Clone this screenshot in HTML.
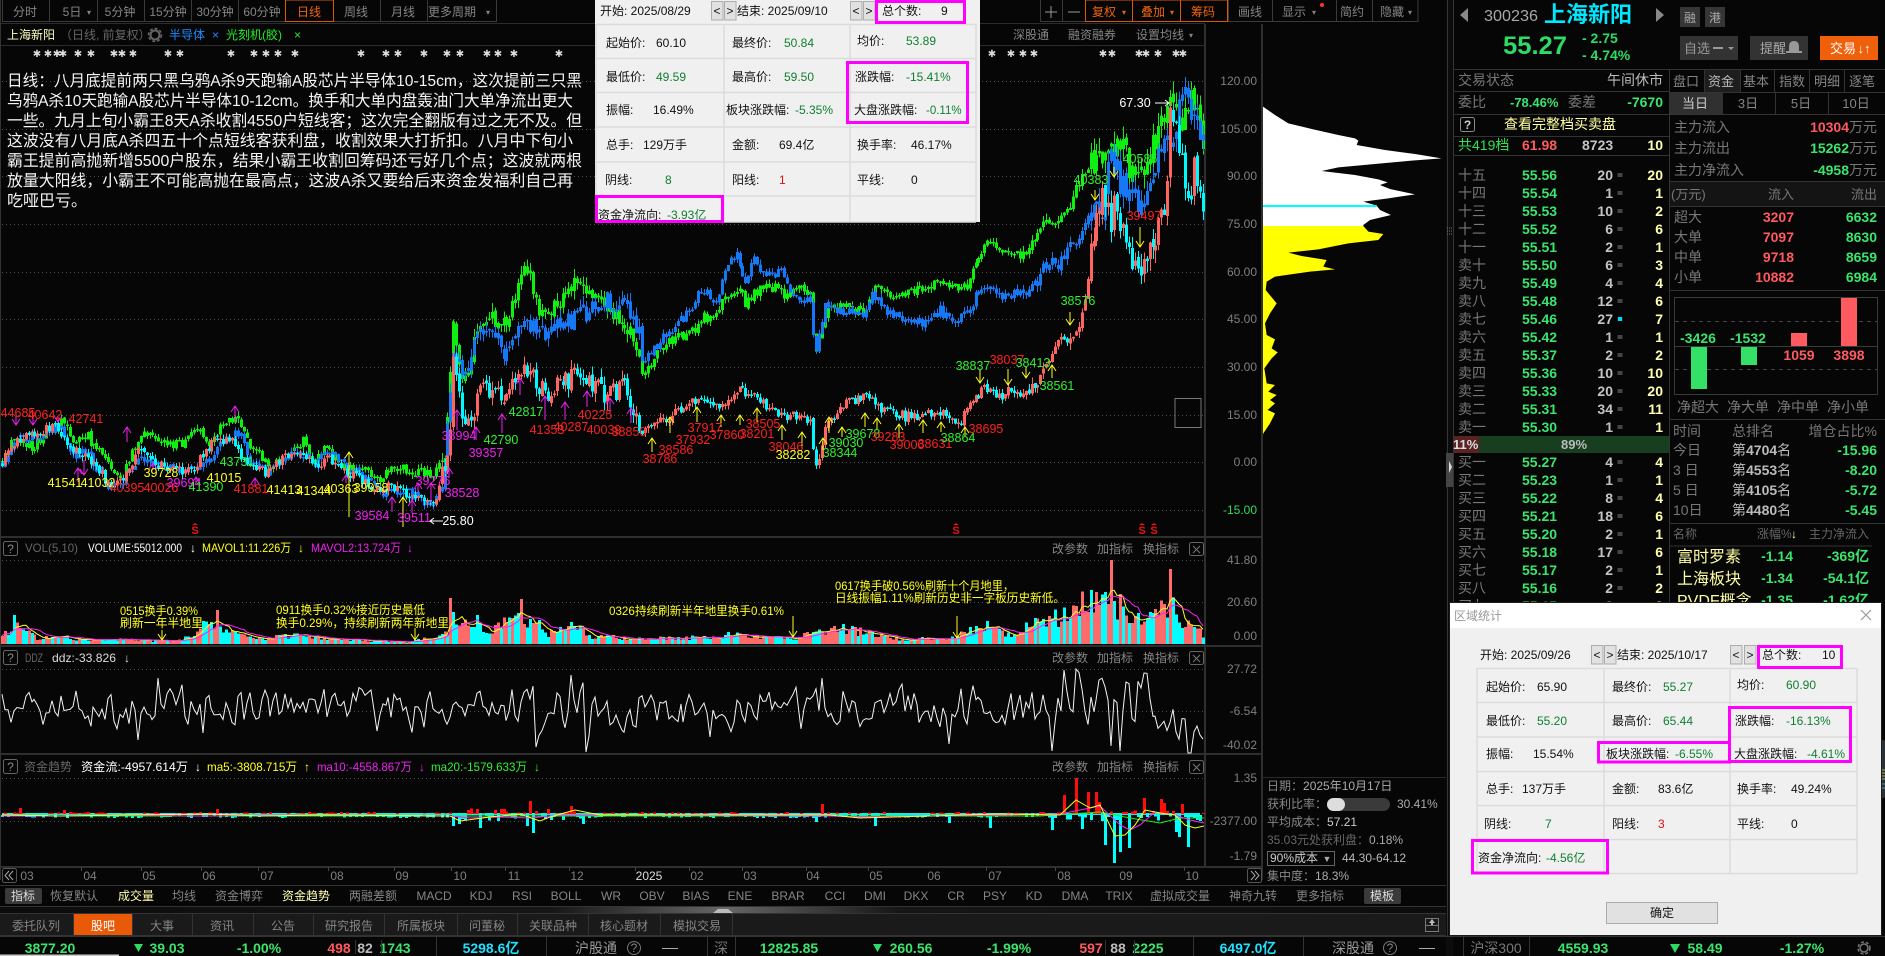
<!DOCTYPE html>
<html lang="zh">
<head>
<meta charset="utf-8">
<title>上海新阳</title>
<style>
html,body{margin:0;padding:0;background:#060606;width:1885px;height:956px;overflow:hidden}
svg{display:block;font-family:"Liberation Sans","WenQuanYi Zen Hei","Noto Sans CJK SC",sans-serif}
text{white-space:pre}
.t{font-size:12px;fill:#858585;text-anchor:middle}
.o{fill:#f0640f}
.ax{font-size:12px;fill:#7f7f7f;text-anchor:end}
.m{font-size:12.5px;text-anchor:middle}
.r{fill:#ff2020}.y{fill:#ffff20}.g{fill:#30f030}.p{fill:#f020f0}.w{fill:#fff}
.b14{font-size:14px;font-weight:bold}
.n{font-size:14px;fill:#777}
.pr{font-size:14px;font-weight:bold;fill:#3be46c}
.v{font-size:14px;font-weight:bold;fill:#c4c4c4;text-anchor:end}
.c{font-size:14px;font-weight:bold;fill:#ffffb0;text-anchor:end}
.up{fill:#ff5a5f}.dn{fill:#3be46c}
.e{text-anchor:end}.mid{text-anchor:middle}
.d{font-size:12px;fill:#111}
.dg{font-size:12px;fill:#0f7f2f}
.ann{font-size:12px;fill:#ffff20}
.note{font-size:16px;fill:#f4f4f4}
.sm{font-size:12px}
</style>
</head>
<body>
<svg xmlns="http://www.w3.org/2000/svg" width="1885" height="956" viewBox="0 0 1885 956">
<rect width="1885" height="956" fill="#060606"/>

<!-- toolbar -->
<g stroke="#3a3a3a" fill="none">
<path d="M2.5 0V21.5H496.5V0M49.5 0V21M97.5 0V21M144.5 0V21M191.5 0V21M238.5 0V21M285.5 0V21M333.5 0V21M380.5 0V21M427.5 0V21"/>
<path d="M0 23.5H1205M0 45.5H1205" stroke="#2c2c2c"/>
<path d="M1040.5 0V21.5H1418V0M1062.5 0V21M1228.5 0V21M1272.5 0V21M1336.5 0V21M1372.5 0V21"/>
</g>
<rect x="285.5" y="0" width="48" height="21.5" fill="none" stroke="#d9560b"/>
<rect x="1085.5" y="0" width="142" height="21.5" fill="none" stroke="#d9560b"/>
<path d="M1132.5 0V21M1180.5 0V21" stroke="#d9560b"/>
<g class="tb">
<text class="t" x="25" y="16">分时</text><text class="t" x="72" y="16">5日</text><text class="t" x="89" y="15" font-size="8" style="font-size:8px">▾</text>
<text class="t" x="120" y="16">5分钟</text><text class="t" x="168" y="16">15分钟</text><text class="t" x="215" y="16">30分钟</text><text class="t" x="262" y="16">60分钟</text>
<text class="t o" x="309" y="16">日线</text><text class="t" x="356" y="16">周线</text><text class="t" x="403" y="16">月线</text><text class="t" x="452" y="16">更多周期</text><text class="t" x="488" y="15" style="font-size:8px">▾</text>
<path d="M1051 6V18M1045 12H1057M1068 12H1080" stroke="#999" fill="none"/>
<text class="t o" x="1104" y="16">复权</text><text class="t o" x="1124" y="15" style="font-size:8px">▾</text>
<text class="t o" x="1153" y="16">叠加</text><text class="t o" x="1172" y="15" style="font-size:8px">▾</text>
<text class="t o" x="1203" y="16">筹码</text>
<text class="t" x="1250" y="16">画线</text><text class="t" x="1294" y="16">显示</text><text class="t" x="1314" y="15" style="font-size:8px">▾</text><circle cx="1322" cy="5" r="2" fill="#f33"/>
<text class="t" x="1352" y="16">简约</text><text class="t" x="1392" y="16">隐藏</text><text class="t" x="1410" y="15" style="font-size:8px">▾</text>
</g>

<!-- title row -->
<text x="7" y="39" class="sm" fill="#ffffc0">上海新阳</text>
<text x="60" y="39" class="sm" fill="#666">（日线, 前复权）</text>
<circle cx="155" cy="35" r="4.5" fill="none" stroke="#666" stroke-width="2"/><circle cx="155" cy="35" r="6.5" fill="none" stroke="#666" stroke-width="1.5" stroke-dasharray="3 2"/>
<text x="169" y="39" class="sm" fill="#1a8cff">半导体</text><text x="212" y="39" class="sm" fill="#1a8cff">×</text>
<text x="226" y="39" class="sm" fill="#20f020">光刻机(胶)</text><text x="294" y="39" class="sm" fill="#20f020">×</text>
<text class="t" x="1031" y="39">深股通</text><text class="t" x="1092" y="39">融资融券</text><text class="t" x="1160" y="39">设置均线</text><text class="t" x="1191" y="38" style="font-size:8px">▾</text>

<!-- star marks -->
<g fill="#ddd" style="font-size:10px" text-anchor="middle" font-family="DejaVu Sans">
<text x="37" y="57">✱</text><text x="48" y="57">✱</text><text x="57" y="57">✱</text><text x="63" y="57">✱</text><text x="78" y="57">✱</text><text x="91" y="57">✱</text><text x="114" y="57">✱</text><text x="122" y="57">✱</text><text x="133" y="57">✱</text><text x="168" y="57">✱</text><text x="180" y="57">✱</text><text x="231" y="57">✱</text><text x="254" y="57">✱</text><text x="266" y="57">✱</text><text x="278" y="57">✱</text><text x="295" y="57">✱</text><text x="361" y="57">✱</text><text x="386" y="57">✱</text><text x="398" y="57">✱</text><text x="424" y="57">✱</text><text x="447" y="57">✱</text><text x="460" y="57">✱</text><text x="487" y="57">✱</text><text x="498" y="57">✱</text><text x="514" y="57">✱</text><text x="559" y="57">✱</text>
<text x="992" y="57">✱</text><text x="1011" y="57">✱</text><text x="1023" y="57">✱</text><text x="1034" y="57">✱</text><text x="1103" y="57">✱</text><text x="1112" y="57">✱</text><text x="1139" y="57">✱</text><text x="1146" y="57">✱</text><text x="1158" y="57">✱</text><text x="1176" y="57">✱</text><text x="1183" y="57">✱</text>
</g>

<!-- grids -->
<g stroke="#4d4d4d" stroke-dasharray="1 3" fill="none">
<path d="M2 81.5H1205M2 129.5H1205M2 176.5H1205M2 224.5H1205M2 272.5H1205M2 319.5H1205M2 367.5H1205M2 415.5H1205M2 462.5H1205M2 510.5H1205"/>
<path d="M2 560.5H1205M2 602.5H1205M2 669.5H1205M2 711.5H1205M2 778.5H1205M2 821.5H1205"/>
</g>
<path d="M0.5 0V880" stroke="#333"/>
<g stroke="#2f2f2f" stroke-width="2" fill="none">
<path d="M0 537H1262M0 646H1262M0 754H1262M0 867H1262M1205 24V867M1262 24V880"/>
</g>
<rect x="1175" y="398.5" width="26" height="29" fill="none" stroke="#777"/>

<!-- candles placed by script -->
<g id="chart" shape-rendering="crispEdges"></g>
<g id="lines" fill="none"></g>

<!-- note overlay -->
<text class="note" x="7" y="86" textLength="575" lengthAdjust="spacingAndGlyphs">日线：八月底提前两只黑乌鸦A杀9天跑输A股芯片半导体10-15cm，这次提前三只黑</text>
<text class="note" x="7" y="106" textLength="566" lengthAdjust="spacingAndGlyphs">乌鸦A杀10天跑输A股芯片半导体10-12cm。换手和大单内盘轰油门大单净流出更大</text>
<text class="note" x="7" y="126" textLength="575" lengthAdjust="spacingAndGlyphs">一些。九月上旬小霸王8天A杀收割4550户短线客；这次完全翻版有过之无不及。但</text>
<text class="note" x="7" y="146" textLength="566" lengthAdjust="spacingAndGlyphs">这波没有八月底A杀四五十个点短线客获利盘，收割效果大打折扣。八月中下旬小</text>
<text class="note" x="7" y="166" textLength="575" lengthAdjust="spacingAndGlyphs">霸王提前高抛新增5500户股东，结果小霸王收割回筹码还亏好几个点；这波就两根</text>
<text class="note" x="7" y="186" textLength="566" lengthAdjust="spacingAndGlyphs">放量大阳线，小霸王不可能高抛在最高点，这波A杀又要给后来资金发福利自己再</text>
<text class="note" x="7" y="206">吃哑巴亏。</text>

<!-- main-chart numeric labels -->
<g class="m">
<text class="m r" x="18" y="417">44685</text><text class="m r" x="45" y="419">40642</text><text class="m r" x="86" y="423">42741</text>
<text class="m y" x="65" y="487">41541</text><text class="m y" x="98" y="487">41032</text><text class="m r" x="127" y="492">40395</text><text class="m r" x="161" y="492">40026</text><text class="m y" x="161" y="477">39728</text><text class="m p" x="184" y="487">39694</text><text class="m g" x="206" y="491">41390</text><text class="m y" x="224" y="482">41015</text><text class="m g" x="237" y="466">43731</text><text class="m r" x="251" y="493">41881</text><text class="m y" x="284" y="494">41413</text><text class="m y" x="314" y="495">41344</text><text class="m y" x="341" y="493">40363</text><text class="m y" x="371" y="492">39958</text>
<text class="m p" x="372" y="520">39584</text><text class="m p" x="414" y="522">39511</text><text class="m p" x="433" y="485">39276</text><text class="m p" x="462" y="497">38528</text><text class="m p" x="459" y="440">38994</text><text class="m p" x="486" y="457">39357</text><text class="m g" x="501" y="444">42790</text><text class="m g" x="526" y="416">42817</text><text class="m r" x="547" y="434">41353</text><text class="m r" x="571" y="431">40287</text><text class="m r" x="595" y="419">40225</text><text class="m r" x="604" y="434">40039</text><text class="m r" x="629" y="436">38850</text>
<text class="m r" x="660" y="463">38786</text><text class="m r" x="676" y="454">38586</text><text class="m r" x="693" y="444">37932</text><text class="m r" x="705" y="432">37917</text><text class="m r" x="727" y="439">37860</text><text class="m r" x="757" y="438">38201</text><text class="m r" x="763" y="428">38505</text><text class="m r" x="786" y="451">38046</text><text class="m y" x="793" y="459">38282</text><text class="m g" x="846" y="447">39030</text><text class="m g" x="840" y="457">38344</text><text class="m g" x="863" y="438">39678</text><text class="m r" x="888" y="441">39283</text><text class="m r" x="907" y="449">39006</text><text class="m r" x="935" y="448">38631</text><text class="m g" x="958" y="442">38864</text><text class="m r" x="986" y="433">38695</text>
<text class="m g" x="973" y="370">38837</text><text class="m r" x="1007" y="364">38037</text><text class="m g" x="1033" y="367">38413</text><text class="m g" x="1057" y="390">38561</text><text class="m g" x="1078" y="305">38576</text><text class="m g" x="1091" y="184">40383</text><text class="m g" x="1140" y="163">40585</text><text class="m r" x="1144" y="220">39497</text>
<text class="m w" x="458" y="525">25.80</text><text class="m w" x="1135" y="107">67.30</text>
</g>
<path d="M443 521H430M434 518L430 521L434 524M1155 103H1169M1165 100L1169 103L1165 106" stroke="#fff" fill="none"/>
<g fill="#ee1111" font-weight="bold" style="font-size:11px" text-anchor="middle">
<text x="195" y="534">S</text><text x="956" y="534">S</text><text x="1142" y="534">S</text><text x="1154" y="534">S</text>
</g>
<path d="M192 525L195 523L198 525ZM953 525L956 523L959 525ZM1139 525L1142 523L1145 525ZM1151 525L1154 523L1157 525Z" fill="#ee1111"/>

<!-- price axis -->
<g>
<text class="ax" x="1257" y="85">120.00</text><text class="ax" x="1257" y="133">105.00</text><text class="ax" x="1257" y="180">90.00</text><text class="ax" x="1257" y="228">75.00</text><text class="ax" x="1257" y="276">60.00</text><text class="ax" x="1257" y="323">45.00</text><text class="ax" x="1257" y="371">30.00</text><text class="ax" x="1257" y="419">15.00</text><text class="ax" x="1257" y="466">0.00</text><text class="ax" x="1257" y="514" style="fill:#2edb64">-15.00</text>
<text class="ax" x="1257" y="564">41.80</text><text class="ax" x="1257" y="606">20.60</text><text class="ax" x="1257" y="640">0.00</text>
<text class="ax" x="1257" y="673">27.72</text><text class="ax" x="1257" y="715">-6.54</text><text class="ax" x="1257" y="749">-40.02</text>
<text class="ax" x="1257" y="782">1.35</text><text class="ax" x="1257" y="825">-2377.00</text><text class="ax" x="1257" y="860">-1.79</text>
</g>

<!-- chip distribution -->
<g transform="translate(1255,90) scale(.33333)">
<polygon fill="#fff" points="24,50 60,75 100,100 175,118 250,135 300,145 310,152 305,165 390,180 480,192 560,205 470,212 380,220 250,232 200,243 300,255 370,268 398,277 375,285 405,297 480,313 400,325 325,335 365,347 375,360 408,375 345,390 325,405 325,408 24,408"/>
<rect x="24" y="345" width="341" height="6" fill="#00ffff"/>
<polygon fill="#ffff00" points="24,408 325,408 340,425 385,432 370,450 280,460 190,478 100,488 140,498 215,510 205,530 240,538 165,545 60,560 35,575 32,600 65,640 45,670 30,700 35,735 60,748 50,775 68,787 50,805 28,835 35,880 60,885 40,905 65,915 45,930 60,940 38,960 60,970 45,1000 25,1030 24,1035"/>
</g>
<path d="M1262 777.5H1447" stroke="#2a2a2a"/>

<!-- sub-panel headers -->
<g>
<rect x="3.5" y="541.5" width="14" height="14" rx="2" fill="none" stroke="#666"/><text x="10.5" y="553" class="mid sm" fill="#888">?</text>
<text x="25" y="552" class="sm" fill="#666" textLength="53" lengthAdjust="spacingAndGlyphs">VOL(5,10)</text>
<text x="88" y="552" class="sm" fill="#fff" textLength="94" lengthAdjust="spacingAndGlyphs">VOLUME:55012.000</text><text x="193" y="552" class="mid sm" fill="#fff">↓</text>
<text x="202" y="552" class="sm" fill="#ffff20" textLength="89" lengthAdjust="spacingAndGlyphs">MAVOL1:11.226万</text><text x="301" y="552" class="mid sm" fill="#ffff20">↓</text>
<text x="311" y="552" class="sm" fill="#f020f0" textLength="90" lengthAdjust="spacingAndGlyphs">MAVOL2:13.724万</text><text x="410" y="552" class="mid sm" fill="#f020f0">↓</text>

<rect x="3.5" y="650.5" width="14" height="14" rx="2" fill="none" stroke="#666"/><text x="10.5" y="662" class="mid sm" fill="#888">?</text>
<text x="25" y="662" class="sm" fill="#666" textLength="18" lengthAdjust="spacingAndGlyphs">DDZ</text>
<text x="52" y="662" class="sm" fill="#ddd" textLength="64" lengthAdjust="spacingAndGlyphs">ddz:-33.826</text><text x="127" y="662" class="mid sm" fill="#ddd">↓</text>

<rect x="3.5" y="759.5" width="14" height="14" rx="2" fill="none" stroke="#666"/><text x="10.5" y="771" class="mid sm" fill="#888">?</text>
<text x="24" y="771" class="sm" fill="#666">资金趋势</text>
<text x="81" y="771" class="sm" fill="#fff" textLength="107" lengthAdjust="spacingAndGlyphs">资金流:-4957.614万</text><text x="198" y="771" class="mid sm" fill="#fff">↓</text>
<text x="207" y="771" class="sm" fill="#ffff20" textLength="90" lengthAdjust="spacingAndGlyphs">ma5:-3808.715万</text><text x="307" y="771" class="mid sm" fill="#ffff20">↑</text>
<text x="317" y="771" class="sm" fill="#f020f0" textLength="95" lengthAdjust="spacingAndGlyphs">ma10:-4558.867万</text><text x="422" y="771" class="mid sm" fill="#f020f0">↓</text>
<text x="431" y="771" class="sm" fill="#30f030" textLength="96" lengthAdjust="spacingAndGlyphs">ma20:-1579.633万</text><text x="537" y="771" class="mid sm" fill="#30f030">↓</text>

<text class="t" x="1070" y="553">改参数</text><text class="t" x="1115" y="553">加指标</text><text class="t" x="1161" y="553">换指标</text>
<rect x="1189.5" y="542.5" width="14" height="13" rx="2" fill="none" stroke="#666"/><path d="M1193 546L1200 553M1200 546L1193 553" stroke="#777"/>
<text class="t" x="1070" y="662">改参数</text><text class="t" x="1115" y="662">加指标</text><text class="t" x="1161" y="662">换指标</text>
<rect x="1189.5" y="651.5" width="14" height="13" rx="2" fill="none" stroke="#666"/><path d="M1193 655L1200 662M1200 655L1193 662" stroke="#777"/>
<text class="t" x="1070" y="771">改参数</text><text class="t" x="1115" y="771">加指标</text><text class="t" x="1161" y="771">换指标</text>
<rect x="1189.5" y="760.5" width="14" height="13" rx="2" fill="none" stroke="#666"/><path d="M1193 764L1200 771M1200 764L1193 771" stroke="#777"/>
</g>

<!-- vol annotations -->
<g>
<text class="ann" x="120" y="615" textLength="78" lengthAdjust="spacingAndGlyphs">0515换手0.39%</text>
<text class="ann" x="120" y="627" textLength="83" lengthAdjust="spacingAndGlyphs">刷新一年半地里</text>
<text class="ann" x="276" y="614" textLength="149" lengthAdjust="spacingAndGlyphs">0911换手0.32%接近历史最低</text>
<text class="ann" x="276" y="627" textLength="173" lengthAdjust="spacingAndGlyphs">换手0.29%，持续刷新两年新地里</text>
<text class="ann" x="609" y="615" textLength="175" lengthAdjust="spacingAndGlyphs">0326持续刷新半年地里换手0.61%</text>
<text class="ann" x="835" y="590" textLength="179" lengthAdjust="spacingAndGlyphs">0617换手破0.56%刷新十个月地里，</text>
<text class="ann" x="835" y="602" textLength="230" lengthAdjust="spacingAndGlyphs">日线振幅1.11%刷新历史非一字板历史新低。</text>
</g>

<!-- date axis -->
<g class="ax" style="text-anchor:middle">
<text class="ax" style="text-anchor:middle" x="27" y="880">03</text><text class="ax" style="text-anchor:middle" x="90" y="880">04</text><text class="ax" style="text-anchor:middle" x="149" y="880">05</text><text class="ax" style="text-anchor:middle" x="209" y="880">06</text><text class="ax" style="text-anchor:middle" x="267" y="880">07</text><text class="ax" style="text-anchor:middle" x="337" y="880">08</text><text class="ax" style="text-anchor:middle" x="402" y="880">09</text><text class="ax" style="text-anchor:middle" x="460" y="880">10</text><text class="ax" style="text-anchor:middle" x="514" y="880">11</text><text class="ax" style="text-anchor:middle" x="577" y="880">12</text><text class="ax" style="text-anchor:middle;fill:#ddd" x="649" y="880">2025</text><text class="ax" style="text-anchor:middle" x="697" y="880">02</text><text class="ax" style="text-anchor:middle" x="750" y="880">03</text><text class="ax" style="text-anchor:middle" x="813" y="880">04</text><text class="ax" style="text-anchor:middle" x="876" y="880">05</text><text class="ax" style="text-anchor:middle" x="934" y="880">06</text><text class="ax" style="text-anchor:middle" x="995" y="880">07</text><text class="ax" style="text-anchor:middle" x="1064" y="880">08</text><text class="ax" style="text-anchor:middle" x="1126" y="880">09</text><text class="ax" style="text-anchor:middle" x="1192" y="880">10</text>
</g>
<path d="M81.5 867V871M141.5 867V871M201.5 867V871M258.5 867V871M328.5 867V871M394.5 867V871M451.5 867V871M505.5 867V871M569.5 867V871M635.5 867V871M689.5 867V871M742.5 867V871M806.5 867V871M868.5 867V871M986.5 867V871M1055.5 867V871M1184.5 867V871" stroke="#444"/>
<rect x="2.5" y="868.5" width="14" height="14" rx="2" fill="none" stroke="#555"/><path d="M9 871L5 875.5L9 880M13 871L9 875.5L13 880" stroke="#aaa" fill="none"/>
<rect x="1247.5" y="868.5" width="14" height="14" rx="2" fill="none" stroke="#555"/><path d="M1251 871L1255 875.5L1251 880M1255 871L1259 875.5L1255 880" stroke="#aaa" fill="none"/>

<!-- chip info -->
<g font-size="12" style="font-size:12px" fill="#888">
<text x="1267" y="790">日期：<tspan fill="#aaa">2025年10月17日</tspan></text>
<text x="1267" y="808">获利比率：</text>
<rect x="1327" y="798" width="63" height="13" rx="6.5" fill="#3a3a3a"/><rect x="1327" y="798" width="18" height="13" rx="6.5" fill="#ddd"/>
<text x="1397" y="808" fill="#aaa">30.41%</text>
<text x="1267" y="826">平均成本：<tspan fill="#ccc">57.21</tspan></text>
<text x="1267" y="844" fill="#666">35.03元处获利盘：<tspan fill="#aaa">0.18%</tspan></text>
<rect x="1267.5" y="851.5" width="67" height="14" fill="none" stroke="#666"/>
<text x="1270" y="862" fill="#ccc">90%成本</text><text x="1327" y="862" class="mid" fill="#aaa" style="font-size:9px">▼</text>
<text x="1342" y="862" fill="#bbb">44.30-64.12</text>
<text x="1267" y="880">集中度：<tspan fill="#aaa">18.3%</tspan></text>
</g>

<!-- indicator bar -->
<rect x="0" y="885" width="1450" height="1" fill="#333"/><rect x="0" y="906" width="1450" height="1" fill="#333"/>
<rect x="5" y="888" width="37" height="16" rx="2" fill="#3a3a3a"/><rect x="1364" y="888" width="37" height="16" rx="2" fill="#3a3a3a"/>
<g class="t">
<text class="t" x="23" y="900" style="fill:#ddd">指标</text><text class="t" x="74" y="900">恢复默认</text><text class="t" x="136" y="900" style="fill:#ffffb0">成交量</text><text class="t" x="184" y="900">均线</text><text class="t" x="239" y="900">资金博弈</text><text class="t" x="306" y="900" style="fill:#ffffb0">资金趋势</text><text class="t" x="373" y="900">两融差额</text>
<text class="t" x="434" y="900">MACD</text><text class="t" x="481" y="900">KDJ</text><text class="t" x="522" y="900">RSI</text><text class="t" x="566" y="900">BOLL</text><text class="t" x="611" y="900">WR</text><text class="t" x="652" y="900">OBV</text><text class="t" x="696" y="900">BIAS</text><text class="t" x="740" y="900">ENE</text><text class="t" x="788" y="900">BRAR</text><text class="t" x="835" y="900">CCI</text><text class="t" x="875" y="900">DMI</text><text class="t" x="916" y="900">DKX</text><text class="t" x="956" y="900">CR</text><text class="t" x="995" y="900">PSY</text><text class="t" x="1034" y="900">KD</text><text class="t" x="1075" y="900">DMA</text><text class="t" x="1119" y="900">TRIX</text>
<text class="t" x="1180" y="900">虚拟成交量</text><text class="t" x="1253" y="900">神奇九转</text><text class="t" x="1320" y="900">更多指标</text><text class="t" x="1382" y="900" style="fill:#ddd">模板</text>
</g>
<defs><linearGradient id="sl" x1="0" x2="1"><stop offset="0" stop-color="#0c0c0c"/><stop offset=".38" stop-color="#161616"/><stop offset=".5" stop-color="#666"/><stop offset=".62" stop-color="#161616"/><stop offset="1" stop-color="#0c0c0c"/></linearGradient></defs>
<rect x="0" y="907" width="1450" height="6" fill="url(#sl)"/><path d="M713 913L718 909H728L733 913Z" fill="#bbb"/>

<!-- tab bar -->
<rect x="0" y="913" width="1450" height="23" fill="#1a1a1a"/>
<rect x="73" y="913" width="59" height="23" fill="#e85a08"/>
<path d="M73.5 913V936M132.5 913V936M192.5 913V936M253.5 913V936M313.5 913V936M384.5 913V936M457.5 913V936M517.5 913V936M588.5 913V936M660.5 913V936M732.5 913V936M0 935.5H1450M0 913.5H1450" stroke="#333"/>
<g>
<text class="t" x="36" y="930">委托队列</text><text class="t" x="103" y="930" style="fill:#fff">股吧</text><text class="t" x="162" y="930">大事</text><text class="t" x="222" y="930">资讯</text><text class="t" x="283" y="930">公告</text><text class="t" x="349" y="930">研究报告</text><text class="t" x="421" y="930">所属板块</text><text class="t" x="487" y="930">问董秘</text><text class="t" x="553" y="930">关联品种</text><text class="t" x="624" y="930">核心题材</text><text class="t" x="697" y="930">模拟交易</text>
</g>
<path d="M1425.5 918.5H1438.5V931.5H1425.5ZM1425.5 925.5H1438.5" fill="none" stroke="#777"/><path d="M1432 919L1435 923H1433V925H1431V923H1429Z" fill="#bbb"/>

<!-- right panel -->
<rect x="1446" y="0" width="7" height="956" fill="#0c0c0c"/>
<path d="M1447.5 0V936M1453.5 0V936" stroke="#333"/>
<rect x="1446" y="453" width="7" height="34" fill="#444"/><path d="M1449 461L1452 467L1449 473Z" fill="#ddd"/>
<path d="M1447 228H1452M1447 231H1452M1447 234H1452" stroke="#777" stroke-dasharray="1 1"/>

<path d="M1468 8L1460 15L1468 22Z" fill="#888"/>
<text x="1484" y="21" style="font-size:16px" fill="#a8a8a8" textLength="54" lengthAdjust="spacingAndGlyphs">300236</text>
<text x="1544" y="22" style="font-size:22px" fill="#00e8ff" font-weight="bold">上海新阳</text>
<path d="M1656 8L1664 15L1656 22Z" fill="#888"/>
<rect x="1680" y="7" width="20" height="20" fill="#363636"/><rect x="1705" y="7" width="20" height="20" fill="#363636"/>
<text x="1690" y="22" class="mid sm" fill="#aaa">融</text><text x="1715" y="22" class="mid sm" fill="#aaa">港</text>
<text x="1503" y="54" style="font-size:25px" font-weight="bold" fill="#2edb64" textLength="64" lengthAdjust="spacingAndGlyphs">55.27</text>
<text x="1582" y="43" class="b14" fill="#2edb64">- 2.75</text><text x="1582" y="60" class="b14" fill="#2edb64">- 4.74%</text>
<rect x="1680" y="36" width="58" height="24" fill="#333"/><rect x="1750" y="36" width="58" height="24" fill="#333"/><rect x="1820" y="36" width="58" height="24" fill="#f0600a"/>
<text x="1684" y="53" style="font-size:13px" fill="#999">自选</text><rect x="1713" y="47" width="10" height="2" fill="#999"/><path d="M1728 47H1734L1731 50Z" fill="#999"/>
<text x="1760" y="53" style="font-size:13px" fill="#aaa">提醒</text><path d="M1794 41Q1799 41 1799 47V51H1802V53H1786V51H1789V47Q1789 41 1794 41Z" fill="#999"/>
<text x="1830" y="53" style="font-size:13px" fill="#fff">交易</text><text x="1864" y="53" class="mid" style="font-size:13px" fill="#fff" font-weight="bold">↓↑</text>

<path d="M1453 69.5H1885M1453 91.5H1669M1453 114.5H1669M1453 136.5H1669M1453 155.5H1669M1669.5 69V602" stroke="#333" fill="none"/>
<text x="1458" y="85" class="n">交易状态</text><text x="1663" y="85" class="e" style="font-size:14px" fill="#bbb">午间休市</text>
<text x="1458" y="107" class="n">委比</text><text x="1510" y="107" class="pr" style="font-size:13px">-78.46%</text><text x="1568" y="107" class="n">委差</text><text x="1663" y="107" class="pr e">-7670</text>
<rect x="1460.5" y="117.5" width="14" height="14" rx="2" fill="none" stroke="#888"/><text x="1467.5" y="129" class="mid sm" fill="#ccc" font-weight="bold">?</text>
<text x="1504" y="129" style="font-size:14px" fill="#ffffa0">查看完整档买卖盘</text>
<text x="1458" y="150" style="font-size:14px" fill="#30e050">共419档</text><text x="1522" y="150" class="pr" style="fill:#ff5a5f">61.98</text><text x="1582" y="150" class="pr" style="fill:#c4c4c4">8723</text><text x="1663" y="150" class="c">10</text>

<g>
<text class="n" x="1458" y="180">十五</text><text class="pr" x="1522" y="180">55.56</text><text class="v" x="1613" y="180">20</text><text class="c" x="1663" y="180">20</text>
<text class="n" x="1458" y="198">十四</text><text class="pr" x="1522" y="198">55.54</text><text class="v" x="1613" y="198">1</text><text class="c" x="1663" y="198">1</text>
<text class="n" x="1458" y="216">十三</text><text class="pr" x="1522" y="216">55.53</text><text class="v" x="1613" y="216">10</text><text class="c" x="1663" y="216">2</text>
<text class="n" x="1458" y="234">十二</text><text class="pr" x="1522" y="234">55.52</text><text class="v" x="1613" y="234">6</text><text class="c" x="1663" y="234">6</text>
<text class="n" x="1458" y="252">十一</text><text class="pr" x="1522" y="252">55.51</text><text class="v" x="1613" y="252">2</text><text class="c" x="1663" y="252">1</text>
<text class="n" x="1458" y="270">卖十</text><text class="pr" x="1522" y="270">55.50</text><text class="v" x="1613" y="270">6</text><text class="c" x="1663" y="270">3</text>
<text class="n" x="1458" y="288">卖九</text><text class="pr" x="1522" y="288">55.49</text><text class="v" x="1613" y="288">4</text><text class="c" x="1663" y="288">4</text>
<text class="n" x="1458" y="306">卖八</text><text class="pr" x="1522" y="306">55.48</text><text class="v" x="1613" y="306">12</text><text class="c" x="1663" y="306">6</text>
<text class="n" x="1458" y="324">卖七</text><text class="pr" x="1522" y="324">55.46</text><text class="v" x="1613" y="324">27</text><text class="c" x="1663" y="324">7</text>
<text class="n" x="1458" y="342">卖六</text><text class="pr" x="1522" y="342">55.42</text><text class="v" x="1613" y="342">1</text><text class="c" x="1663" y="342">1</text>
<text class="n" x="1458" y="360">卖五</text><text class="pr" x="1522" y="360">55.37</text><text class="v" x="1613" y="360">2</text><text class="c" x="1663" y="360">2</text>
<text class="n" x="1458" y="378">卖四</text><text class="pr" x="1522" y="378">55.36</text><text class="v" x="1613" y="378">10</text><text class="c" x="1663" y="378">10</text>
<text class="n" x="1458" y="396">卖三</text><text class="pr" x="1522" y="396">55.33</text><text class="v" x="1613" y="396">20</text><text class="c" x="1663" y="396">20</text>
<text class="n" x="1458" y="414">卖二</text><text class="pr" x="1522" y="414">55.31</text><text class="v" x="1613" y="414">34</text><text class="c" x="1663" y="414">11</text>
<text class="n" x="1458" y="432">卖一</text><text class="pr" x="1522" y="432">55.30</text><text class="v" x="1613" y="432">1</text><text class="c" x="1663" y="432">1</text>
</g>
<path d="M1620 173V431M1620 460V605" stroke="#444" stroke-width="5" stroke-dasharray="4 14"/>
<rect x="1618" y="317" width="4" height="4" fill="#00d8ff"/>
<rect x="1454" y="436" width="25" height="17" fill="#5a2222"/><rect x="1479" y="436" width="190" height="17" fill="#173f1f"/>
<text x="1453" y="449" style="font-size:13px" fill="#ddd" font-weight="bold">11%</text><text x="1574" y="449" class="mid" style="font-size:13px" fill="#bbb" font-weight="bold">89%</text>
<g>
<text class="n" x="1458" y="467">买一</text><text class="pr" x="1522" y="467">55.27</text><text class="v" x="1613" y="467">4</text><text class="c" x="1663" y="467">4</text>
<text class="n" x="1458" y="485">买二</text><text class="pr" x="1522" y="485">55.23</text><text class="v" x="1613" y="485">1</text><text class="c" x="1663" y="485">1</text>
<text class="n" x="1458" y="503">买三</text><text class="pr" x="1522" y="503">55.22</text><text class="v" x="1613" y="503">8</text><text class="c" x="1663" y="503">4</text>
<text class="n" x="1458" y="521">买四</text><text class="pr" x="1522" y="521">55.21</text><text class="v" x="1613" y="521">18</text><text class="c" x="1663" y="521">6</text>
<text class="n" x="1458" y="539">买五</text><text class="pr" x="1522" y="539">55.20</text><text class="v" x="1613" y="539">2</text><text class="c" x="1663" y="539">1</text>
<text class="n" x="1458" y="557">买六</text><text class="pr" x="1522" y="557">55.18</text><text class="v" x="1613" y="557">17</text><text class="c" x="1663" y="557">6</text>
<text class="n" x="1458" y="575">买七</text><text class="pr" x="1522" y="575">55.17</text><text class="v" x="1613" y="575">2</text><text class="c" x="1663" y="575">1</text>
<text class="n" x="1458" y="593">买八</text><text class="pr" x="1522" y="593">55.16</text><text class="v" x="1613" y="593">2</text><text class="c" x="1663" y="593">2</text>
<text class="n" x="1458" y="611">买九</text><text class="pr" x="1522" y="611">55.15</text><text class="v" x="1613" y="611">2</text><text class="c" x="1663" y="611">2</text>
</g>

<!-- right fund column -->
<rect x="1704" y="70" width="36" height="22" fill="#1e1e1e"/><rect x="1670" y="93" width="53" height="21" fill="#303030"/>
<path d="M1670 92.5H1885M1670 114.5H1885M1704.5 70V92M1740.5 70V92M1774.5 70V92M1809.5 70V92M1844.5 70V92M1775.5 93V114M1828.5 93V114" stroke="#333"/>
<g style="font-size:13px">
<text class="t" style="font-size:13px" x="1686" y="86">盘口</text><text class="t" style="font-size:13px;fill:#bbb" x="1721" y="86">资金</text><text class="t" style="font-size:13px" x="1756" y="86">基本</text><text class="t" style="font-size:13px" x="1792" y="86">指数</text><text class="t" style="font-size:13px" x="1827" y="86">明细</text><text class="t" style="font-size:13px" x="1862" y="86">逐笔</text>
<text class="t" style="font-size:13px;fill:#ccc" x="1695" y="108">当日</text><text class="t" style="font-size:13px" x="1748" y="108">3日</text><text class="t" style="font-size:13px" x="1801" y="108">5日</text><text class="t" style="font-size:13px" x="1856" y="108">10日</text>
</g>
<text class="n" x="1674" y="132">主力流入</text><text class="up b14 e" x="1849" y="132">10304</text><text class="n e" x="1877" y="132">万元</text>
<text class="n" x="1674" y="153">主力流出</text><text class="dn b14 e" x="1849" y="153">15262</text><text class="n e" x="1877" y="153">万元</text>
<text class="n" x="1674" y="175">主力净流入</text><text class="dn b14 e" x="1849" y="175">-4958</text><text class="n e" x="1877" y="175">万元</text>
<rect x="1670" y="181" width="215" height="25" fill="#141414"/><path d="M1670 181.5H1885M1670 206.5H1885" stroke="#333"/>
<text x="1671" y="199" style="font-size:13px" fill="#777">(万元)</text><text x="1794" y="199" class="e" style="font-size:13px" fill="#777">流入</text><text x="1877" y="199" class="e" style="font-size:13px" fill="#777">流出</text>
<text class="n" x="1674" y="222">超大</text><text class="up b14 e" x="1794" y="222">3207</text><text class="dn b14 e" x="1877" y="222">6632</text>
<text class="n" x="1674" y="242">大单</text><text class="up b14 e" x="1794" y="242">7097</text><text class="dn b14 e" x="1877" y="242">8630</text>
<text class="n" x="1674" y="262">中单</text><text class="up b14 e" x="1794" y="262">9718</text><text class="dn b14 e" x="1877" y="262">8659</text>
<text class="n" x="1674" y="282">小单</text><text class="up b14 e" x="1794" y="282">10882</text><text class="dn b14 e" x="1877" y="282">6984</text>
<path d="M1670 290.5H1885" stroke="#333"/>
<rect x="1674.5" y="297.5" width="203" height="97" fill="none" stroke="#3a3a3a"/><path d="M1674 346.5H1878" stroke="#3a3a3a"/><path d="M1675 321.5H1877M1675 369.5H1877" stroke="#444" stroke-dasharray="4 4"/>
<rect x="1691" y="347" width="16" height="42" fill="#35e066"/><rect x="1741" y="347" width="16" height="18" fill="#35e066"/><rect x="1791" y="333" width="16" height="13" fill="#ff5a5f"/><rect x="1841" y="298" width="16" height="48" fill="#ff5a5f"/>
<text class="dn b14 mid" x="1698" y="343">-3426</text><text class="dn b14 mid" x="1748" y="343">-1532</text><text class="up b14 mid" x="1799" y="360">1059</text><text class="up b14 mid" x="1849" y="360">3898</text>
<text class="n mid" x="1698" y="412">净超大</text><text class="n mid" x="1748" y="412">净大单</text><text class="n mid" x="1798" y="412">净中单</text><text class="n mid" x="1848" y="412">净小单</text>
<path d="M1670 419.5H1885" stroke="#333"/>
<text class="n" x="1673" y="436">时间</text><text class="n" x="1732" y="436">总排名</text><text class="n e" x="1877" y="436">增仓占比%</text>
<text class="n" x="1673" y="455">今日</text><text x="1732" y="455" style="font-size:14px" fill="#bbb">第<tspan font-weight="bold">4704</tspan>名</text><text class="dn b14 e" x="1877" y="455">-15.96</text>
<text class="n" x="1673" y="475">3 日</text><text x="1732" y="475" style="font-size:14px" fill="#bbb">第<tspan font-weight="bold">4553</tspan>名</text><text class="dn b14 e" x="1877" y="475">-8.20</text>
<text class="n" x="1673" y="495">5 日</text><text x="1732" y="495" style="font-size:14px" fill="#bbb">第<tspan font-weight="bold">4105</tspan>名</text><text class="dn b14 e" x="1877" y="495">-5.72</text>
<text class="n" x="1673" y="515">10日</text><text x="1732" y="515" style="font-size:14px" fill="#bbb">第<tspan font-weight="bold">4480</tspan>名</text><text class="dn b14 e" x="1877" y="515">-5.45</text>
<path d="M1670 523.5H1885M1670 546H1872" stroke="#333"/>
<text x="1673" y="538" class="sm" fill="#666">名称</text><text x="1757" y="538" class="sm" fill="#666">涨幅%</text><text x="1791" y="538" class="sm" fill="#ffffa0">↓</text><text x="1809" y="538" class="sm" fill="#666">主力净流入</text>
<text x="1677" y="562" style="font-size:16px" fill="#ffffa0">富时罗素</text><text class="dn b14 e" x="1793" y="561">-1.14</text><text class="dn b14 e" x="1869" y="561">-369亿</text>
<text x="1677" y="584" style="font-size:16px" fill="#ffffa0">上海板块</text><text class="dn b14 e" x="1793" y="583">-1.34</text><text class="dn b14 e" x="1869" y="583">-54.1亿</text>
<text x="1677" y="606" style="font-size:16px" fill="#ffffa0">PVDF概念</text><text class="dn b14 e" x="1793" y="605">-1.35</text><text class="dn b14 e" x="1869" y="605">-1.62亿</text>

<!-- status bar -->
<g style="font-size:14px">
<text class="dn b14 mid" x="50" y="953">3877.20</text><path d="M134 944H143L138.500 952Z" fill="#2edb64"/><text class="dn b14 mid" x="167" y="953">39.03</text><text class="dn b14 mid" x="259" y="953">-1.00%</text>
<text class="up b14 mid" x="339" y="953">498</text><text class="b14 mid" fill="#bbb" x="365" y="953">82</text><text class="dn b14 mid" x="395" y="953">1743</text>
<text class="b14 mid" fill="#20e0ff" x="491" y="953">5298.6亿</text>
<text class="n mid" x="596" y="953" style="fill:#999">沪股通</text><circle cx="634" cy="948" r="6.500" fill="none" stroke="#777"/><text x="634" y="952" class="mid sm" fill="#888">?</text><path d="M662 948.500H678" stroke="#aaa"/>
<text class="n mid" x="721" y="953">深</text>
<text class="dn b14 mid" x="789" y="953">12825.85</text><path d="M873 944H882L877.500 952Z" fill="#2edb64"/><text class="dn b14 mid" x="911" y="953">260.56</text><text class="dn b14 mid" x="1009" y="953">-1.99%</text>
<text class="up b14 mid" x="1091" y="953">597</text><text class="b14 mid" fill="#bbb" x="1118" y="953">88</text><text class="dn b14 mid" x="1148" y="953">2225</text>
<text class="b14 mid" fill="#20e0ff" x="1248" y="953">6497.0亿</text>
<text class="n mid" x="1353" y="953" style="fill:#999">深股通</text><circle cx="1390" cy="948" r="6.500" fill="none" stroke="#777"/><text x="1390" y="952" class="mid sm" fill="#888">?</text><path d="M1419 948.500H1435" stroke="#aaa"/>
<text class="n mid" x="1496" y="953">沪深300</text>
<text class="dn b14 mid" x="1583" y="953">4559.93</text><path d="M1670 944H1680L1675 953Z" fill="#2edb64"/><text class="dn b14 mid" x="1705" y="953">58.49</text><text class="dn b14 mid" x="1802" y="953">-1.27%</text>
</g>
<circle cx="1864" cy="948" r="4" fill="none" stroke="#777" stroke-width="1.500"/><circle cx="1864" cy="948" r="6" fill="none" stroke="#777" stroke-width="1.500" stroke-dasharray="3 2"/>
<path d="M0 936.500H1885M355.500 940V954M381.500 940V954M436.500 937V956M546.500 937V956M707.500 937V956M735.500 937V956M1105.500 940V954M1134.500 940V954M1193.500 937V956M1303.500 937V956M1463.500 937V956M1529.500 937V956" stroke="#333"/>
<rect x="0" y="954.500" width="119" height="1.500" fill="#ccc"/>

<!-- scrollbar right -->
<rect x="1877" y="740" width="8" height="58" rx="2" fill="#2a3238"/><path d="M1880 770H1885M1880 773H1885M1880 776H1885M1880 779H1885" stroke="#a8b060"/><path d="M1880 784H1885M1880 788H1885" stroke="#4aa0a8"/>

<!-- dialog 1 -->
<g>
<rect x="595" y="0" width="385" height="222" fill="#f0f0f0"/>
<path d="M596 24.500H976M596 58.500H976M596 92.500H976M596 127H976M596 162H976M596 196H976M596 222H976M596 24V222M724 24V222M850 24V222M976 24V222" stroke="#dcdcdc" stroke-width="1.500" fill="none"/>
<text class="d" x="600" y="15">开始: 2025/08/29</text>
<rect x="711.500" y="1.500" width="11.500" height="18.500" fill="#e1e1e1" stroke="#adadad"/><text class="d mid" x="717" y="15">&lt;</text>
<rect x="724.500" y="1.500" width="11.500" height="18.500" fill="#e1e1e1" stroke="#adadad"/><text class="d mid" x="730" y="15">&gt;</text>
<text class="d" x="737" y="15">结束: 2025/09/10</text>
<rect x="850.500" y="1.500" width="11.500" height="18.500" fill="#e1e1e1" stroke="#adadad"/><text class="d mid" x="856" y="15">&lt;</text>
<rect x="863.500" y="1.500" width="11.500" height="18.500" fill="#e1e1e1" stroke="#adadad"/><text class="d mid" x="869" y="15">&gt;</text>
<text class="d" x="882" y="15">总个数:</text><text class="d" x="941" y="15">9</text>
<text class="d" x="606" y="47">起始价:</text><text class="d" x="656" y="47">60.10</text><text class="d" x="732" y="47">最终价:</text><text class="dg" x="784" y="47">50.84</text><text class="d" x="857" y="45">均价:</text><text class="dg" x="906" y="45">53.89</text>
<text class="d" x="606" y="81">最低价:</text><text class="dg" x="656" y="81">49.59</text><text class="d" x="732" y="81">最高价:</text><text class="dg" x="784" y="81">59.50</text><text class="d" x="855" y="81">涨跌幅:</text><text class="dg" x="906" y="81">-15.41%</text>
<text class="d" x="606" y="114">振幅:</text><text class="d" x="653" y="114">16.49%</text><text class="d" x="726" y="114">板块涨跌幅:</text><text class="dg" x="795" y="114">-5.35%</text><text class="d" x="854" y="114">大盘涨跌幅:</text><text class="dg" x="926" y="114" style="font-size:11.500px">-0.11%</text>
<text class="d" x="606" y="149">总手:</text><text class="d" x="643" y="149">129万手</text><text class="d" x="732" y="149">金额:</text><text class="d" x="779" y="149">69.4亿</text><text class="d" x="857" y="149">换手率:</text><text class="d" x="911" y="149">46.17%</text>
<text class="d" x="605" y="184">阴线:</text><text class="dg" x="665" y="184">8</text><text class="d" x="732" y="184">阳线:</text><text class="d" x="779" y="184" style="fill:#e01010">1</text><text class="d" x="857" y="184">平线:</text><text class="d" x="911" y="184">0</text>
<text class="d" x="598" y="219">资金净流向:</text><text class="dg" x="667" y="219">-3.93亿</text>
<g fill="none" stroke="#ff00ff" stroke-width="3">
<rect x="876.500" y="1.500" width="88" height="21"/><rect x="847.500" y="62.500" width="120" height="60"/><rect x="596.500" y="196.500" width="126" height="25"/>
</g>
</g>

<!-- dialog 2 -->
<g>
<rect x="1449" y="602" width="433" height="334" fill="#1c1c1c"/>
<rect x="1450" y="603" width="431" height="332" fill="#f0f0f0"/>
<rect x="1450" y="603" width="431" height="25" fill="#fff"/>
<text x="1454" y="620" style="font-size:12px" fill="#999">区域统计</text>
<path d="M1861 610L1871 620M1871 610L1861 620" stroke="#999" stroke-width="1.200"/>
<path d="M1477 668.500H1857M1477 702.500H1857M1477 737H1857M1477 771.500H1857M1477 805.500H1857M1477 839.500H1857M1477 873.500H1857M1477 668V874M1604 668V874M1730 668V874M1857 668V874" stroke="#dcdcdc" stroke-width="1.500" fill="none"/>
<text class="d" x="1480" y="659">开始: 2025/09/26</text>
<rect x="1591.500" y="645.500" width="11.500" height="18.500" fill="#e1e1e1" stroke="#adadad"/><text class="d mid" x="1597" y="659">&lt;</text>
<rect x="1604.500" y="645.500" width="11.500" height="18.500" fill="#e1e1e1" stroke="#adadad"/><text class="d mid" x="1610" y="659">&gt;</text>
<text class="d" x="1617" y="659">结束: 2025/10/17</text>
<rect x="1730.500" y="645.500" width="11.500" height="18.500" fill="#e1e1e1" stroke="#adadad"/><text class="d mid" x="1736" y="659">&lt;</text>
<rect x="1744.500" y="645.500" width="11.500" height="18.500" fill="#e1e1e1" stroke="#adadad"/><text class="d mid" x="1750" y="659">&gt;</text>
<text class="d" x="1762" y="659">总个数:</text><text class="d" x="1822" y="659">10</text>
<text class="d" x="1486" y="691">起始价:</text><text class="d" x="1537" y="691">65.90</text><text class="d" x="1612" y="691">最终价:</text><text class="dg" x="1663" y="691">55.27</text><text class="d" x="1737" y="689">均价:</text><text class="dg" x="1786" y="689">60.90</text>
<text class="d" x="1486" y="725">最低价:</text><text class="dg" x="1537" y="725">55.20</text><text class="d" x="1612" y="725">最高价:</text><text class="dg" x="1663" y="725">65.44</text><text class="d" x="1735" y="725">涨跌幅:</text><text class="dg" x="1786" y="725">-16.13%</text>
<text class="d" x="1486" y="758">振幅:</text><text class="d" x="1533" y="758">15.54%</text><text class="d" x="1606" y="758">板块涨跌幅:</text><text class="dg" x="1675" y="758">-6.55%</text><text class="d" x="1734" y="758">大盘涨跌幅:</text><text class="dg" x="1807" y="758">-4.61%</text>
<text class="d" x="1486" y="793">总手:</text><text class="d" x="1522" y="793">137万手</text><text class="d" x="1612" y="793">金额:</text><text class="d" x="1658" y="793">83.6亿</text><text class="d" x="1737" y="793">换手率:</text><text class="d" x="1791" y="793">49.24%</text>
<text class="d" x="1484" y="828">阴线:</text><text class="dg" x="1545" y="828">7</text><text class="d" x="1612" y="828">阳线:</text><text class="d" x="1658" y="828" style="fill:#e01010">3</text><text class="d" x="1737" y="828">平线:</text><text class="d" x="1791" y="828">0</text>
<text class="d" x="1478" y="862">资金净流向:</text><text class="dg" x="1546" y="862">-4.56亿</text>
<g fill="none" stroke="#ff00ff" stroke-width="3">
<rect x="1758.500" y="646.500" width="83" height="21"/><rect x="1729.500" y="707.500" width="121" height="54"/><rect x="1598.500" y="742.500" width="131" height="19.500"/><rect x="1472.500" y="840.500" width="135" height="32.500"/>
</g>
<rect x="1606.500" y="902.500" width="111" height="21" fill="#e1e1e1" stroke="#adadad"/><text class="d mid" x="1662" y="917">确定</text>
</g>
</svg>
<script>
(function(){
var seed=987654;function R(){seed=(seed*16807)%2147483647;return seed/2147483647;}
function z10(a){var o=[];for(var i=0;i<a.length;i+=2)o.push([a[i]/2.45,230+a[i+1]/3]);return o;}
function z11(a){var o=[];for(var i=0;i<a.length;i+=2)o.push([640+a[i]/2.529,60+a[i+1]/3]);return o;}
function z6(a){var o=[];for(var i=0;i<a.length;i+=2)o.push([a[i]/2.45,530+a[i+1]/3]);return o;}
function z7(a){var o=[];for(var i=0;i<a.length;i+=2)o.push([640+a[i]/1.936,530+a[i+1]/3]);return o;}
function ip(p,x){if(x<=p[0][0])return p[0][1];for(var i=1;i<p.length;i++){if(x<=p[i][0]){var t=(x-p[i-1][0])/(p[i][0]-p[i-1][0]);return p[i-1][1]+t*(p[i][1]-p[i-1][1]);}}return p[p.length-1][1];}
var stock=z10([5,700,30,640,60,610,100,600,140,590,170,660,200,670,230,700,270,770,310,730,340,660,380,700,420,720,470,720,530,620,570,640,600,700,650,730,700,680,740,680,780,710,800,670,830,720,880,740,920,780,960,770,1000,790,1040,820,1060,830,1090,700,1100,650,1110,350,1130,550,1165,580,1170,450,1200,500,1240,490,1270,410,1310,450,1340,490,1400,440,1440,440,1480,500,1530,470,1568,590]).concat(z11([0,1110,45,1090,100,1050,150,1020,200,1050,240,990,280,1000,340,1060,400,1070,432,1090,442,1250,470,1090,530,1020,590,1010,620,1060,680,1070,760,1060,800,1100,830,1050,870,980,900,1010,940,990,970,1000,1000,970,1040,870,1080,830,1100,840,1125,700,1145,560,1165,400,1190,490,1200,400,1235,600,1265,630,1300,550,1330,430,1340,150,1360,250,1390,470,1400,300,1425,480]));
var blue=z10([5,700,40,630,100,620,150,580,170,680,210,660,270,780,300,750,340,680,380,690,440,730,470,720,510,690,560,620,590,610,610,700,660,730,700,680,740,670,770,710,800,660,850,720,900,740,930,790,990,780,1040,820,1060,830,1085,760,1110,350,1130,450,1170,330,1210,310,1240,370,1270,280,1310,300,1340,310,1400,270,1450,240,1490,210,1530,220,1568,300]).concat(z11([0,900,30,880,60,830,100,790,130,740,160,680,190,740,215,620,245,580,265,680,285,600,320,640,360,640,380,710,432,720,442,900,470,730,530,760,570,770,585,700,630,760,680,790,720,790,760,750,790,795,830,760,850,710,875,680,905,710,960,700,1000,680,1020,610,1060,610,1090,550,1125,510,1140,440,1170,430,1190,280,1220,380,1240,420,1270,430,1300,310,1340,260,1377,90,1400,200,1425,230]));
var green=z10([5,690,30,630,80,650,120,600,160,570,180,650,210,610,260,700,300,740,340,620,370,600,410,650,450,640,480,600,520,650,540,570,580,570,620,660,660,700,700,680,740,630,770,700,800,650,830,710,880,710,930,750,960,710,1010,720,1060,740,1090,680,1100,480,1110,290,1130,470,1160,340,1180,280,1240,260,1260,200,1280,110,1300,130,1320,260,1350,250,1400,170,1440,180,1500,260,1540,290,1568,410]).concat(z11([0,930,30,910,60,850,100,830,130,820,160,770,190,770,215,700,245,680,265,730,300,690,340,680,380,720,400,660,432,700,442,900,470,750,530,740,570,770,590,680,630,700,680,700,760,670,830,680,840,620,860,600,875,540,900,570,960,580,1000,540,1020,480,1050,500,1080,440,1105,390,1130,310,1170,290,1215,260,1240,330,1270,340,1300,250,1340,150,1360,190,1398,110,1425,270]));
function amp(x){return x>1090?15:(x>440&&x<640)?10:(x>1020?7:(x>640?5.5:5));}
function candles(p,up,dn,k,uw){var a='',b='',prev=ip(p,2);for(var i=0;;i++){var x=Math.round(2+i*2.95);if(x>1203)break;var A=amp(x)*k;var c=ip(p,x)+(R()-.5)*2*A;var o=prev+(R()-.5)*A*.5;prev=c;var t=Math.min(o,c),h=Math.max(1.5,Math.abs(o-c));var wt=t-R()*A*.9,wb=t+h+R()*A*.9;var s='M'+x+' '+wt.toFixed(1)+'h1V'+wb.toFixed(1)+'h-1zM'+(x-1)+' '+t.toFixed(1)+'h'+uw+'v'+h.toFixed(1)+'h-'+uw+'z';if(c<o)a+=s;else b+=s;}return '<path fill="'+up+'" d="'+a+'"/><path fill="'+dn+'" d="'+b+'"/>';}
var h='';
h+=candles(green,'#10f010','#10f010',1,3);
h+=candles(blue,'#1878f0','#1478ff',1,3);
h+=candles(stock,'#ff6560','#00f8ff',1,3);
/* volume */
var vp=z6([5,310,38,255,60,290,90,320,140,305,200,325,300,325,400,330,450,320,530,240,550,290,620,320,730,300,800,320,930,330,1000,335,1040,320,1100,290,1105,230,1120,270,1170,250,1200,310,1225,260,1280,230,1300,235,1340,300,1400,270,1450,310,1568,320]).concat(z7([0,320,100,315,200,300,260,320,300,320,340,285,400,280,450,300,500,320,600,320,670,265,720,315,770,245,830,225,845,185,880,178,913,150,920,180,950,260,1000,218,1025,160,1040,225,1090,300]));
var spikes={};[[15,615],[216,610],[451,598],[522,599],[1112,560],[1169,569],[1090,590],[1106,592],[1120,594]].forEach(function(s){spikes[Math.round((s[0]-2)/2.95)]=s[1];});
var vr='',vc='',vols=[],xs=[];
for(var i=0;;i++){var x=Math.round(2+i*2.95);if(x>1203)break;var top=ip(vp,x);var H=(644-top)*(.45+.55*R());if(spikes[i])H=644-spikes[i];xs.push(x);vols.push(H);var s='M'+(x-1)+' '+(644-H).toFixed(1)+'h3V644h-3z';if(R()>.5)vr+=s;else vc+=s;}
h+='<path fill="#ff6a6a" d="'+vr+'"/><path fill="#00ffff" d="'+vc+'"/>';
/* funds */
var fr='',fc='',fixedUp={};
[[19,808],[63,810],[216,809],[477,809],[529,801],[572,806],[822,804],[1065,795],[1076,778],[1088,792],[1095,792],[1099,802],[1145,798],[1160,799],[1165,803],[1182,804]].forEach(function(s){fixedUp[Math.round((s[0]-2)/2.95)]=s[1];});
var fixedDn={};
[[453,826],[458,824],[481,828],[527,826],[534,833],[584,824],[815,822],[875,826],[950,823],[989,828],[1053,830],[1081,829],[1106,845],[1113,863],[1121,852],[1128,848],[1175,832],[1179,837],[1188,847]].forEach(function(s){fixedDn[Math.round((s[0]-2)/2.95)]=s[1];});
for(i=0;i<xs.length;i++){x=xs[i];var big=(x>1050||(x>450&&x<590))?1:0;var r=R(),m=R();var q=(big?5:1.6)*m*m+.5;if(fixedUp[i])fr+='M'+(x-1)+' '+fixedUp[i]+'h3V814h-3z';else if(fixedDn[i])fc+='M'+(x-1)+' 815h3V'+fixedDn[i]+'h-3z';else if(r<.42)fr+='M'+(x-1)+' '+(814-q).toFixed(1)+'h3V814h-3z';else fc+='M'+(x-1)+' 815h3V'+(816+q).toFixed(1)+'h-3z';}
h+='<rect x="2" y="813" width="1198" height="2" fill="#18e8e8"/><path fill="#ff0c0c" d="'+fr+'"/><path fill="#00ffff" d="'+fc+'"/>';
document.getElementById('chart').innerHTML=h;
/* lines */
var L='';
function ma(n){var o=[];for(var j=0;j<vols.length;j++){var t=0,c=0;for(var k=Math.max(0,j-n+1);k<=j;k++){t+=vols[k];c++;}o.push(xs[j]+','+(644-t/c).toFixed(1));}return o.join(' ');}
L+='<polyline stroke="#ffff20" points="'+ma(5)+'"/><polyline stroke="#ff20ff" points="'+ma(10)+'"/>';
/* DDZ */
var ext={};[[159,678],[571,675],[535,747],[586,752],[139,740],[204,733],[376,731],[821,678],[1064,670],[1076,669],[1053,751],[1120,751],[1187,753],[1145,673],[950,744],[710,737],[1110,746],[1098,680],[1200,735]].forEach(function(s){ext[Math.round((s[0]-2)/2.95)]=s[1];});
var d=[],v=705,sign=1;
for(i=0;i<xs.length;i++){var tgt=707+(R()-.5)*(xs[i]>1040?70:48);if(i%2==0)sign=-sign;var yy=.35*v+.65*tgt+sign*(R()*(xs[i]>1040?10:7));if(ext[i])yy=ext[i];v=yy;yy=Math.max(668,Math.min(753,yy));d.push(xs[i]+','+yy.toFixed(1));}
L+='<polyline stroke="#f4f4f4" points="'+d.join(' ')+'"/>';
/* fund MAs */
L+='<path stroke="#18f018" d="M2 816H1040L1100 812L1130 818L1160 823L1180 818L1204 818"/>';
L+='<path stroke="#ff20ff" d="M2 816L60 816L120 815L200 816L300 815L450 816L470 818L500 817L530 818L560 815L600 815L830 816L860 817L1000 815L1060 814L1100 806L1120 825L1130 830L1140 825L1155 812L1175 815L1190 820L1204 823"/>';
L+='<path stroke="#ffff20" d="M2 815L60 816L130 815L210 814L260 816L320 815L450 816L460 821L490 817L520 814L540 821L550 817L575 810L600 815L830 815L860 818L1000 814L1060 815L1076 800L1090 808L1100 805L1115 836L1125 835L1135 825L1145 810L1160 813L1175 815L1185 825L1195 828L1204 826"/>';
/* arrows */
function arr(x,y1,y2,c){var up=y2<y1,t=up?3:-3;return '<path stroke="'+c+'" d="M'+x+' '+y1+'V'+y2+'M'+(x-4)+' '+(y2+t*2)+'L'+x+' '+y2+'L'+(x+4)+' '+(y2+t*2)+'"/>';}
var ya=[[30,1175,1135],[77,1120,1072],[145,1085,1042],[205,1100,1065],[252,1095,1065],[297,1085,1045],[358,1140,1095],[410,1165,1115],[462,1170,1135],[478,1120,1070],[510,1130,1100],[570,1100,1060],[600,1110,1075],[655,1135,1092],[716,1120,1080],[762,1115,1085],[822,1130,1100],[1043,955,915],[860,930,968],[930,928,975],[975,920,955],[1088,755,795],[1150,390,420],[1200,320,350],[1265,500,560]];
ya.forEach(function(a){L+=arr(Math.round(640+a[0]/2.529),Math.round(60+a[1]/3),Math.round(60+a[2]/3),'#ffff20');});
var ma2=[[310,635,590],[575,575,527],[190,755,715],[40,550,585],[82,555,585],[142,560,575],[205,690,735],[1230,610,553],[1335,570,497],[1385,570,515],[1437,530,483],[1495,550,505],[1547,580,535],[1275,495,445],[1165,630,590],[1120,600,540],[1100,745,715],[960,845,800],[1010,850,810],[848,760,735],[625,770,745],[480,760,740],[375,720,700],[1025,790,760],[1055,820,760]];
ma2.forEach(function(a){L+=arr(Math.round(a[0]/2.45),Math.round(230+a[1]/3),Math.round(230+a[2]/3),'#f020f0');});
L+=arr(349,517,452,'#ffff20')+arr(403,527,497,'#ffff20');
L+=arr(162,630,640,'#ffff20')+arr(415,628,640,'#ffff20')+arr(793,616,637,'#ffff20')+arr(957,616,638,'#ffff20');
document.getElementById('lines').innerHTML=L;
})();
</script>
</body>
</html>
